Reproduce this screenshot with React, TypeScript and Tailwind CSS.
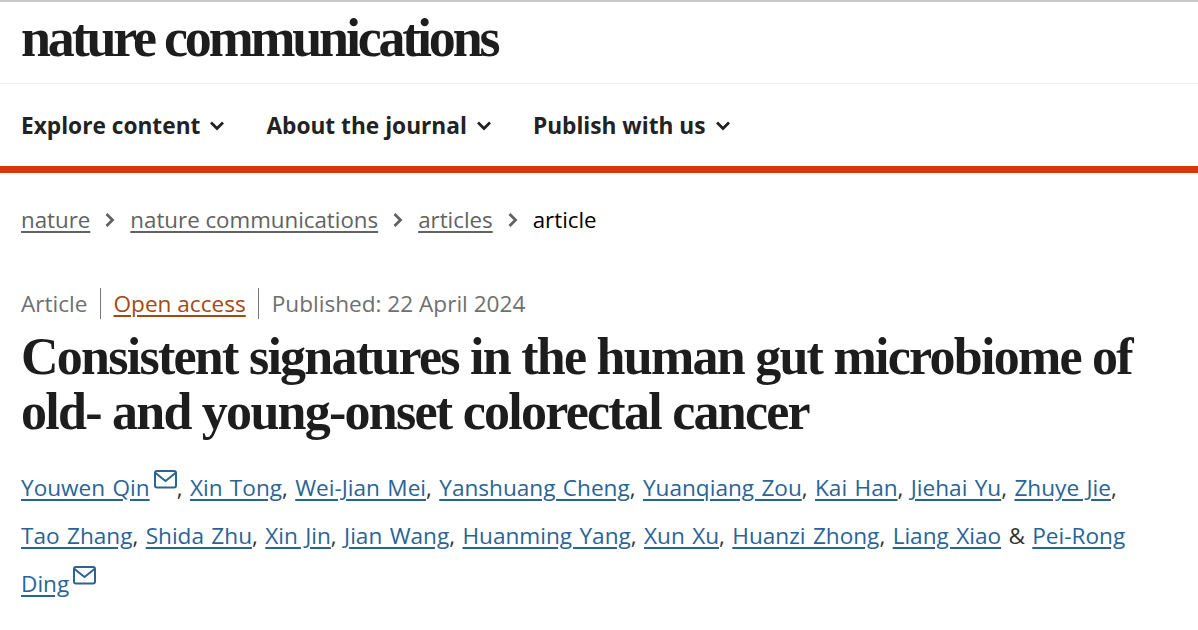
import React from 'react';

const sans = "font-['Open_Sans','Noto_Sans',sans-serif]";

const line1 = ['Xin Tong', 'Wei-Jian Mei', 'Yanshuang Cheng', 'Yuanqiang Zou', 'Kai Han', 'Jiehai Yu', 'Zhuye Jie'];
const line2 = ['Tao Zhang', 'Shida Zhu', 'Xin Jin', 'Jian Wang', 'Huanming Yang', 'Xun Xu', 'Huanzi Zhong'];

const Chevron = () => (
  <svg width="16" height="14" viewBox="0 0 16 14" fill="none" className="ml-[9px] shrink-0">
    <path d="M2 3.5 8 9.5l6-6" stroke="#222222" strokeWidth="2.8" />
  </svg>
);

const Crumb = () => (
  <svg width="12" height="16" viewBox="0 0 12 16" fill="none" className="mx-[14px] shrink-0">
    <path d="M2.5 2 8.5 8l-6 6" stroke="#626262" strokeWidth="2.8" />
  </svg>
);

const Mail = () => (
  <svg width="23" height="19" viewBox="0 0 23 19" fill="none" className="inline-block align-baseline ml-[4px] relative top-[-7px]">
    <rect x="1" y="1" width="21" height="16.5" rx="2" stroke="#2a6496" strokeWidth="2" />
    <path d="M1.5 3 11.5 11 21.5 3" stroke="#2a6496" strokeWidth="2" />
  </svg>
);

const Author = ({ name }: { name: string }) => (
  <a className="text-[#2a6496] underline decoration-[2px] underline-offset-[3px]">{name}</a>
);

const NavItem = ({ label }: { label: string }) => (
  <div className="flex items-center mr-[41px]">
    <span>{label}</span>
    <Chevron />
  </div>
);

export default function App() {
  return (
    <div className={`w-[1198px] h-[630px] overflow-hidden bg-white text-[#222222] ${sans}`}>
      <header className="h-[84px] border-t-2 border-b border-t-[#c8c8c8] border-b-[#eeeeee] pl-[21px] pt-[6px]">
        <div className="font-['Liberation_Serif',serif] font-bold text-[54px] leading-[60px] tracking-[-3.2px] text-[#1d1d1d]">
          nature communications
        </div>
      </header>
      <nav className="h-[82px] flex items-center pl-[21px] pt-[2px] text-[22.7px] font-bold text-[#222222]">
        <NavItem label="Explore content" />
        <NavItem label="About the journal" />
        <NavItem label="Publish with us" />
      </nav>
      <div className="h-[7px] bg-[#d9350f]" />
      <div className="flex items-center pl-[21px] pt-[30px] text-[22.3px] leading-[34px] text-[#626262]">
        <a className="underline underline-offset-[3px]">nature</a>
        <Crumb />
        <a className="underline underline-offset-[3px]">nature communications</a>
        <Crumb />
        <a className="underline underline-offset-[3px]">articles</a>
        <Crumb />
        <span className="text-black">article</span>
      </div>
      <div className="flex items-center pl-[21px] mt-[51px] text-[22.6px] leading-[31px] text-[#6f6f6f]">
        <span className="pr-[12px] border-r border-[#777777]">Article</span>
        <a className="pl-[13px] pr-[12px] border-r border-[#777777] text-[#a6480f]"><span className="underline underline-offset-[3px]">Open access</span></a>
        <span className="pl-[13px]">Published: 22 April 2024</span>
      </div>
      <h1 className="pl-[21px] pt-[10px] font-['Liberation_Serif',serif] font-bold text-[52px] leading-[55px] tracking-[-1.74px] text-[#1d1d1d]">
        Consistent signatures in the human gut microbiome of
        <br />
        old- and young-onset colorectal cancer
      </h1>
      <div className="pl-[21px] pt-[25px] text-[22.6px] leading-[48px] [word-spacing:1.5px] text-[#333333]">
        <div>
          <Author name="Youwen Qin" />
          <Mail />,{' '}
          {line1.map((n, i) => (
            <React.Fragment key={n}>
              <Author name={n} />
              {i < line1.length - 1 ? ', ' : ','}
            </React.Fragment>
          ))}
        </div>
        <div>
          {line2.map(n => (
            <React.Fragment key={n}>
              <Author name={n} />,{' '}
            </React.Fragment>
          ))}
          <Author name="Liang Xiao" /> &amp; <Author name="Pei-Rong" />
        </div>
        <div>
          <Author name="Ding" />
          <Mail />
        </div>
      </div>
    </div>
  );
}
